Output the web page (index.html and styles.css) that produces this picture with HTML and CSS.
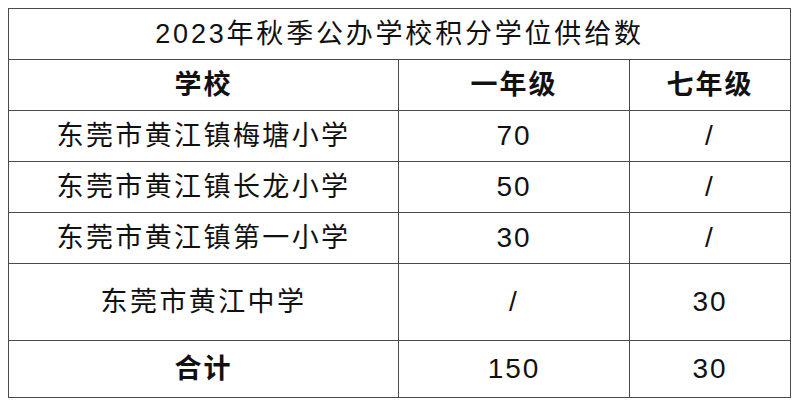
FILE: index.html
```html
<!DOCTYPE html>
<html lang="zh-CN">
<head>
<meta charset="utf-8">
<title>2023年秋季公办学校积分学位供给数</title>
<link rel="stylesheet" href="styles.css">
</head>
<body>
<div class="sheet">
  <div class="cell title">2023年秋季公办学校积分学位供给数</div>
  <div class="cell head">学校</div>
  <div class="cell head">一年级</div>
  <div class="cell head">七年级</div>
  <div class="cell">东莞市黄江镇梅塘小学</div>
  <div class="cell num">70</div>
  <div class="cell num">/</div>
  <div class="cell">东莞市黄江镇长龙小学</div>
  <div class="cell num">50</div>
  <div class="cell num">/</div>
  <div class="cell">东莞市黄江镇第一小学</div>
  <div class="cell num">30</div>
  <div class="cell num">/</div>
  <div class="cell">东莞市黄江中学</div>
  <div class="cell num">/</div>
  <div class="cell num">30</div>
  <div class="cell head">合计</div>
  <div class="cell num">150</div>
  <div class="cell num">30</div>
</div>
</body>
</html>
```
FILE: styles.css
```css
html, body {
  margin: 0;
  padding: 0;
  background: #fff;
}
body {
  padding: 8px;
  font-family: "Liberation Sans", "Noto Sans CJK SC", sans-serif;
  color: #111;
}
.sheet {
  display: grid;
  grid-template-columns: 389px 230px 160px;
  grid-template-rows: 50px 50px 50px 50px 50px 76px 56px;
  gap: 1px;
  padding: 1px;
  width: max-content;
  background: #4a4a4a;
}
.cell {
  background: #fff;
  display: flex;
  align-items: center;
  justify-content: center;
  font-size: 27px;
  letter-spacing: 2.4px;
  line-height: 1;
  white-space: nowrap;
}
.title {
  grid-column: 1 / -1;
  letter-spacing: 2.8px;
}
.head {
  font-weight: 700;
  letter-spacing: 2px;
}
.num {
  font-size: 28px;
  letter-spacing: 2px;
}
```
